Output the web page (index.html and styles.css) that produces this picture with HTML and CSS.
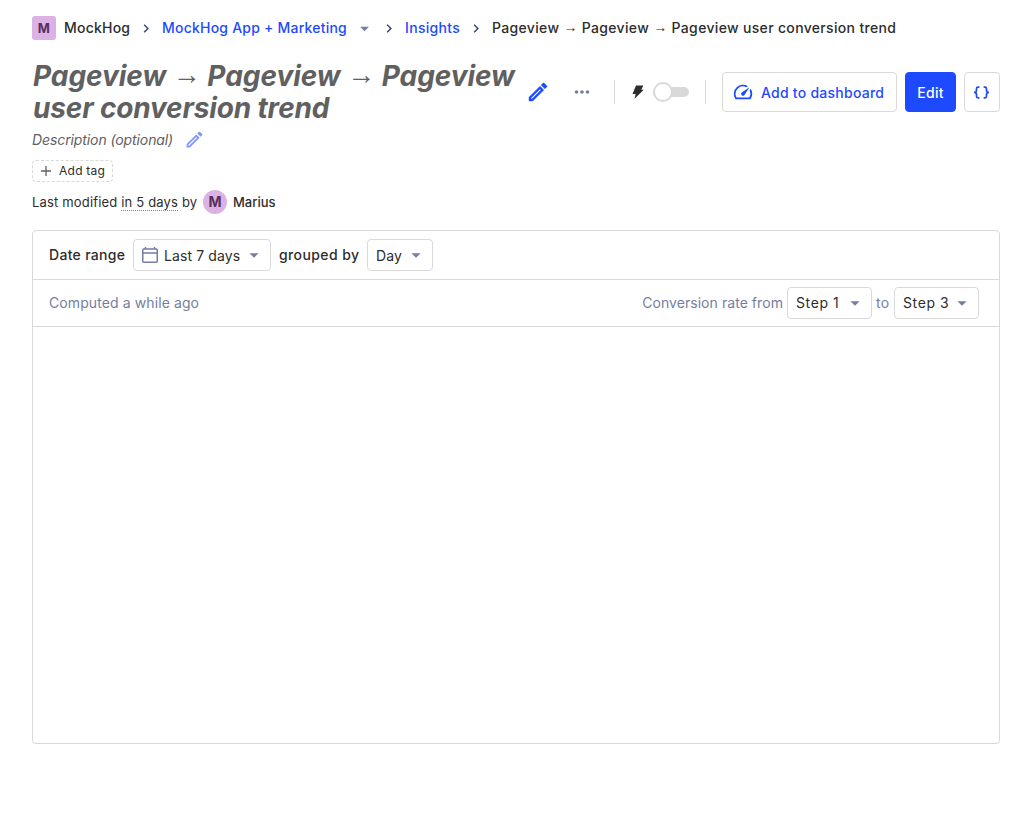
FILE: index.html
```html
<!DOCTYPE html>
<html lang="en">
<head>
<meta charset="utf-8">
<title>Insight</title>
<link rel="stylesheet" href="styles.css">
</head>
<body>
<svg class="defs" aria-hidden="true">
  <symbol id="chevron" viewBox="0 0 24 24"><path d="M9.4 18 8 16.6l4.6-4.6L8 7.4 9.4 6l6 6z"/></symbol>
  <symbol id="caret" viewBox="0 0 24 24"><path d="m7 10 5 5 5-5z"/></symbol>
  <symbol id="pencil" viewBox="0 0 24 24"><path d="m14.06 9.02.92.92L5.92 19H5v-.92zM17.66 3c-.25 0-.51.1-.7.29l-1.83 1.83 3.75 3.75 1.83-1.83a1 1 0 0 0 0-1.41l-2.34-2.34c-.2-.2-.45-.29-.71-.29m-3.6 3.19L3 17.25V21h3.75L17.81 9.94z"/></symbol>
</svg>
<main class="page">
  <nav class="crumbs">
    <span class="lettermark">M</span>
    <span class="crumb org">MockHog</span>
    <svg class="chev"><use href="#chevron"/></svg>
    <a class="crumb link project">MockHog App + Marketing</a>
    <svg class="crumb-caret"><use href="#caret"/></svg>
    <svg class="chev"><use href="#chevron"/></svg>
    <a class="crumb link insights">Insights</a>
    <svg class="chev"><use href="#chevron"/></svg>
    <span class="crumb current">Pageview <span class="arrow">→</span> Pageview <span class="arrow">→</span> Pageview user conversion trend</span>
  </nav>
  <header class="head">
    <h1 class="title">Pageview <span class="arrow">→</span> Pageview <span class="arrow">→</span> Pageview<br><span class="line2">user conversion trend</span></h1>
    <svg class="title-edit"><use href="#pencil"/></svg>
    <div class="actions">
      <svg class="more" viewBox="0 0 24 24"><path d="M6 10a2 2 0 1 0 0 4 2 2 0 0 0 0-4m6 0a2 2 0 1 0 0 4 2 2 0 0 0 0-4m6 0a2 2 0 1 0 0 4 2 2 0 0 0 0-4"/></svg>
      <span class="divider"></span>
      <svg class="bolt" viewBox="0 0 12 14"><path d="M4 .5h7.300L9.300 4.700h2.500L2.500 13.700l1.200-4.800H.5z"/></svg>
      <span class="switch"><span class="knob"></span></span>
      <span class="divider second"></span>
      <button class="btn dash"><svg class="gauge" viewBox="0 0 24 24"><path d="m20.380 8.570-1.230 1.850a8 8 0 0 1-.22 7.580H5.070A8 8 0 0 1 15.580 6.850l1.850-1.230A10 10 0 0 0 3.350 19a2 2 0 0 0 1.720 1h13.850a2 2 0 0 0 1.740-1 10 10 0 0 0-.27-10.440zm-9.790 6.840a2 2 0 0 0 2.830 0l5.660-8.490-8.490 5.660a2 2 0 0 0 0 2.830z"/></svg><span>Add to dashboard</span></button>
      <button class="btn edit">Edit</button>
      <button class="btn code"><svg viewBox="0 0 16 12"><path d="M6 .9H4.800Q3.300.9 3.300 2.400v1.500Q3.300 5.900 1 5.900q2.300 0 2.300 2v1.700q0 1.500 1.500 1.500H6M10 .9h1.200q1.500 0 1.500 1.500v1.500q0 2 2.300 2-2.300 0-2.300 2v1.700q0 1.500-1.500 1.500H10"/></svg></button>
    </div>
  </header>
  <div class="desc"><span>Description (optional)</span><svg><use href="#pencil"/></svg></div>
  <div class="tag"><svg viewBox="0 0 12 12"><path d="M6 1v10M1 6h10"/></svg><span>Add tag</span></div>
  <div class="modified"><span class="when-line">Last modified <span class="when">in 5 days</span> by</span><span class="avatar">M</span><span class="user">Marius</span></div>
  <section class="card">
    <div class="row filters">
      <span class="label range">Date range</span>
      <button class="select date"><svg class="cal" viewBox="0 0 16 18"><path d="M1.750 3h12.500q1 0 1 1v11.250q0 1-1 1H1.750q-1 0-1-1V4q0-1 1-1zM1 7h14M3.500 1v2M12.500 1v2"/></svg><span>Last 7 days</span><svg class="caret"><use href="#caret"/></svg></button>
      <span class="label grouped">grouped by</span>
      <button class="select day"><span>Day</span><svg class="caret"><use href="#caret"/></svg></button>
    </div>
    <div class="row computed">
      <span class="ago">Computed a while ago</span>
      <span class="rate">Conversion rate from</span>
      <button class="select step"><span>Step 1</span><svg class="caret"><use href="#caret"/></svg></button>
      <span class="to">to</span>
      <button class="select step"><span>Step 3</span><svg class="caret"><use href="#caret"/></svg></button>
    </div>
    <div class="chart"></div>
  </section>
</main>
</body>
</html>
```

FILE: styles.css
```css
* { box-sizing: border-box; }
body { margin: 0; background: #fff; color: #2d2d2d; font: 14px/20px Inter, "Liberation Sans", sans-serif; }
.defs { position: absolute; width: 0; height: 0; }
svg { display: block; flex: none; fill: currentColor; }
.page { padding: 16px 32px 0; }
.arrow { font-family: "Liberation Sans", sans-serif; font-weight: 400; line-height: 1; vertical-align: 1px; }
.crumbs { display: flex; align-items: center; height: 24px; white-space: nowrap; font-weight: 500; letter-spacing: .22px; }
.lettermark { width: 24px; height: 24px; margin-right: 8px; border-radius: 3px; background: #dcb1e3; color: #572e5e; font-weight: 700; font-size: 13px; line-height: 24px; text-align: center; }
.org { width: 66px; }
.project { width: 185px; }
.insights { width: 55px; letter-spacing: .32px; }
.current { letter-spacing: .33px; }
.link { color: #1d4aff; }
.chev { width: 17px; height: 17px; margin: 0 7px 0 8px; color: #35416b; }
.crumb-caret { width: 21px; height: 21px; margin: 0 6px 0 7px; color: #747ea2; }
.crumb-caret + .chev { margin-left: 0; }
.head { display: flex; align-items: center; height: 64px; margin-top: 20px; }
.title { flex: none; width: 484px; margin: 0; padding-left: 1px; color: #606060; font-size: 28px; line-height: 32px; font-weight: 700; font-style: italic; letter-spacing: -.05px; white-space: nowrap; }
.title .arrow { vertical-align: 2px; }
.line2 { letter-spacing: -.16px; }
.title-edit { width: 24px; height: 24px; margin-left: 10px; color: #1d4aff; stroke: currentColor; stroke-width: .4px; }
.actions { display: flex; align-items: center; margin-left: auto; }
.more { width: 22px; height: 22px; color: #747ea2; }
.divider { width: 1px; height: 24px; margin: 0 17px 0 21px; background: #d9d9d9; }
.bolt { width: 12px; height: 14px; }
.switch { display: flex; align-items: center; width: 36px; height: 10px; margin-left: 9px; border-radius: 5px; background: #d9d9d9; }
.knob { flex: none; width: 20px; height: 20px; border: 2px solid #d9d9d9; border-radius: 50%; background: #fff; }
.second { margin: 0 16px; }
button { font-family: inherit; font-size: 14px; line-height: 20px; white-space: nowrap; }
.btn { display: flex; align-items: center; justify-content: center; height: 40px; padding: 0; border: 1px solid #d9d9d9; border-radius: 4px; background: #fff; color: #1d4aff; font-weight: 500; letter-spacing: .25px; }
.dash { width: 175px; padding: 2px 0 0 9px; justify-content: flex-start; }
.gauge { width: 22px; height: 22px; margin: -3px 7px 0 0; }
.edit { width: 51px; margin: 0 8px; padding-top: 2px; background: #1d4aff; border-color: #1d4aff; color: #fff; }
.code { width: 36px; }
.code svg { width: 17px; height: 13px; margin-right: 1px; fill: none; stroke: currentColor; stroke-width: 1.6; }
.desc { display: flex; align-items: center; height: 24px; margin-top: 4px; color: #606060; font-style: italic; letter-spacing: -.1px; }
.desc span { width: 141px; white-space: nowrap; }
.desc svg { width: 21px; height: 21px; margin: -1px 0 0 11px; color: #8296ff; }
.tag { display: flex; align-items: center; width: 81px; height: 22px; margin-top: 8px; padding-left: 7px; border: 1px dashed #d9d9d9; border-radius: 4px; font-size: 12px; letter-spacing: .25px; white-space: nowrap; }
.tag svg { width: 12px; height: 12px; margin-right: 7px; fill: none; stroke: #606060; stroke-width: 1.3; }
.modified { display: flex; align-items: center; height: 24px; margin-top: 8px; font-size: 13px; white-space: nowrap; }
.when-line { width: 165px; letter-spacing: .17px; }
.when { border-bottom: 1px dotted #888; }
.avatar { width: 24px; height: 24px; margin: 0 6px; border-radius: 50%; background: #dcb1e3; color: #572e5e; font-weight: 700; font-size: 14px; line-height: 24px; text-align: center; }
.user { font-weight: 500; }
.card { height: 514px; margin-top: 16px; border: 1px solid #d9d9d9; border-radius: 4px; }
.row { display: flex; align-items: center; white-space: nowrap; border-bottom: 1px solid #d9d9d9; }
.filters { height: 49px; padding-left: 16px; }
.label { font-weight: 500; letter-spacing: .3px; }
.range { width: 76px; margin-right: 8px; }
.grouped { width: 80px; margin: 0 8px; letter-spacing: .4px; }
.select { display: flex; align-items: center; height: 32px; padding: 0 5px 0 8px; border: 1px solid #d9d9d9; border-radius: 4px; background: #fff; color: #2d2d2d; letter-spacing: .1px; }
.caret { width: 22px; height: 22px; margin-left: auto; color: #747ea2; }
.date { width: 138px; }
.cal { width: 16px; height: 18px; margin-right: 6px; fill: none; stroke: #747ea2; stroke-width: 1.5; }
.day { width: 66px; }
.filters .select span { padding-top: 2px; }
.computed { height: 47px; padding: 0 20px 0 16px; color: #747ea2; }
.ago { letter-spacing: .1px; }
.rate { margin: 0 4px 0 auto; letter-spacing: .06px; }
.step { width: 85px; letter-spacing: .6px; }
.to { width: 14px; margin: 0 4px; letter-spacing: .4px; }
```
